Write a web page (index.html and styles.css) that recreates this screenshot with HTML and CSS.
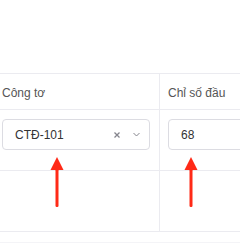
FILE: index.html
```html
<!DOCTYPE html>
<html>
  <head>
    <title>Chỉ số công tơ</title>
    <link rel="stylesheet" href="styles.css">
  </head>
  <body>
    <div class="sheet">
      <table class="grid">
        <thead>
          <tr>
            <th class="col-meter">Công tơ</th>
            <th class="col-start">Chỉ số đầu</th>
          </tr>
        </thead>
        <tbody>
          <tr class="row-edit">
            <td class="col-meter">
              <div class="select">
                <span class="select-value">CTĐ-101</span>
                <svg class="select-clear" width="6" height="6" viewBox="0 0 6 6">
                  <path d="M0.5 0.5L5.5 5.5M5.5 0.5L0.5 5.5" stroke="#85858d" stroke-width="1.3" />
                </svg>
                <svg class="select-arrow" width="7" height="5" viewBox="0 0 7 5">
                  <path d="M0.5 1L3.5 4L6.5 1" fill="none" stroke="#85858d" stroke-width="1" />
                </svg>
              </div>
            </td>
            <td class="col-start">
              <input class="num" value="68" />
            </td>
          </tr>
          <tr class="row-empty">
            <td class="col-meter"></td>
            <td class="col-start"></td>
          </tr>
        </tbody>
      </table>
      <div class="foot"></div>

      <!-- annotation arrows -->
      <svg class="arrow arrow-one" width="14" height="52" viewBox="0 0 14 52">
        <path d="M7 0L13.5 13H0.5Z" fill="#ff2a17" />
        <rect x="5.5" y="12" width="3" height="38" rx="1.2" fill="#ff2a17" />
      </svg>
      <svg class="arrow arrow-two" width="14" height="52" viewBox="0 0 14 52">
        <path d="M7 0L13.5 13H0.5Z" fill="#ff2a17" />
        <rect x="5.5" y="12" width="3" height="38" rx="1.2" fill="#ff2a17" />
      </svg>
    </div>
  </body>
</html>
```

FILE: styles.css
```css
body {
  margin: 0;
  background: #fff;
  font-family: "Liberation Sans", Arial, Helvetica, sans-serif;
  font-size: 12px;
  color: #333;
}

.sheet {
  position: relative;
  padding-top: 73px;
  height: 250px;
  box-sizing: border-box;
  overflow: hidden;
}

.grid {
  border-collapse: collapse;
  margin-left: -8px;
  width: 258px;
  table-layout: fixed;
}

.grid th,
.grid td {
  border-top: 1px solid #ebebf0;
  border-bottom: 1px solid #ebebf0;
  padding: 0 10px;
  text-align: left;
  vertical-align: top;
}

.grid th {
  height: 33px;
  vertical-align: middle;
  font-weight: normal;
  color: #555;
  padding-top: 2px;
}

.col-meter {
  width: 147px;
  border-right: 1px solid #ebebf0;
}

.col-start {
  padding-left: 8px !important;
}

.row-edit td {
  height: 51px;
  padding-top: 9px;
}

.row-empty td {
  height: 60px;
}

.select {
  display: flex;
  align-items: center;
  height: 29px;
  border: 1px solid #dcdce2;
  border-radius: 4px;
  padding: 0 9px 0 12px;
  box-sizing: content-box;
  width: 125px;
}

.select-value {
  flex: 1;
  color: #333;
  padding-top: 1px;
}

.select-clear {
  margin-right: 13px;
}

.num {
  display: block;
  width: 100px;
  height: 29px;
  border: 1px solid #dcdce2;
  border-radius: 4px;
  padding: 0 12px;
  font: inherit;
  color: #333;
  box-sizing: content-box;
}

.foot {
  height: 10px;
  border-bottom: 1px solid #f4f4f7;
}

.arrow {
  position: absolute;
  top: 157px;
}

.arrow-one {
  left: 50px;
}

.arrow-two {
  left: 184px;
}
```
